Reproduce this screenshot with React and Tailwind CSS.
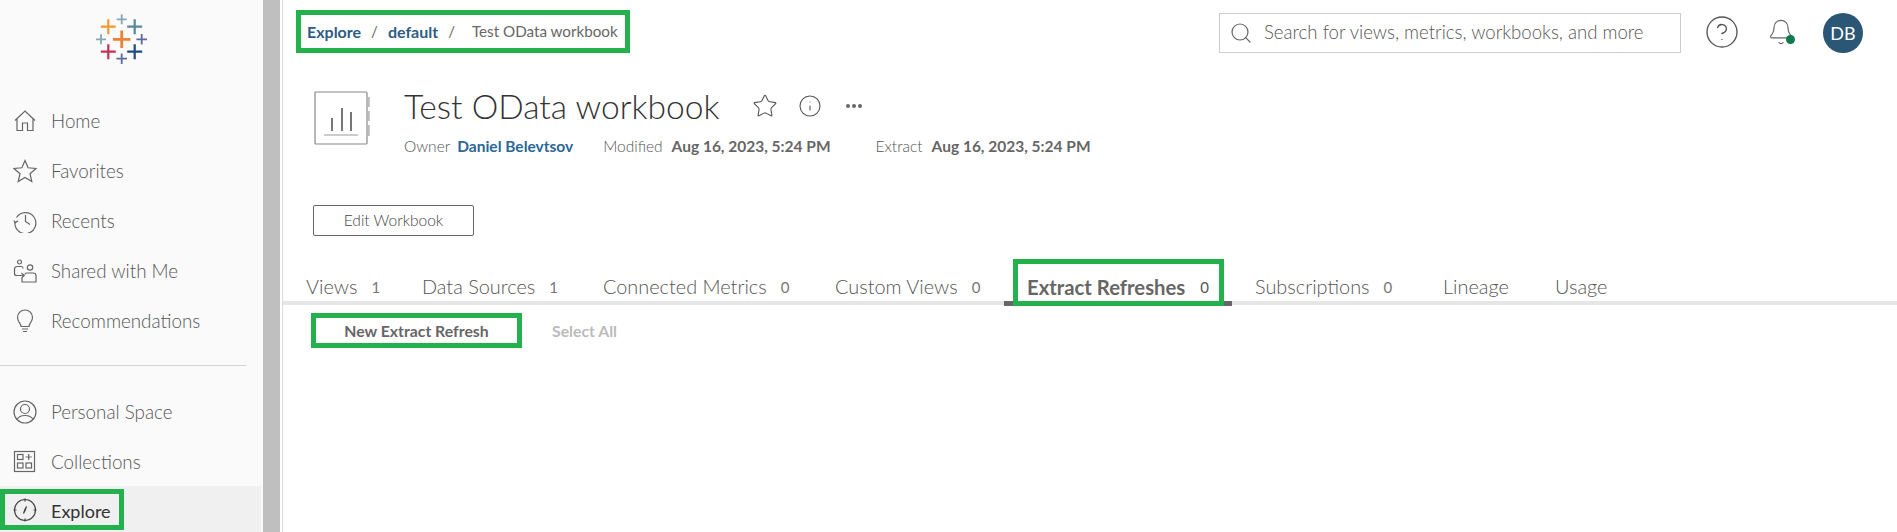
import React from "react";
import { Star, Info, Search, CircleHelp, Bell } from "lucide-react";

const font = "font-['Lato','Liberation_Sans',sans-serif]";

function Cross({ x, y, r, w, c }) {
  return (
    <path d={`M${x - r} ${y}H${x + r}M${x} ${y - r}V${y + r}`} stroke={c} strokeWidth={w} fill="none" />
  );
}

function Logo() {
  return (
    <svg width="52" height="52" viewBox="96 14 52 52">
      <Cross x={121.7} y={39.3} r={8.7} w={2.8} c="#ee8133" />
      <Cross x={121.7} y={19.3} r={5} w={1.8} c="#84a9b5" />
      <Cross x={108.3} y={26.7} r={7.5} w={2.2} c="#f0992e" />
      <Cross x={134.7} y={26.7} r={7.5} w={2.2} c="#5b879b" />
      <Cross x={101} y={39.3} r={5} w={1.8} c="#84a9b5" />
      <Cross x={141.7} y={39.3} r={5.3} w={1.8} c="#5f6a9c" />
      <Cross x={108.3} y={51.7} r={7.5} w={2.2} c="#c8304f" />
      <Cross x={134.7} y={51.7} r={7.5} w={2.2} c="#1f4a80" />
      <Cross x={121.7} y={58.7} r={5.3} w={1.8} c="#5f6a9c" />
    </svg>
  );
}

const S = { fill: "none", stroke: "#666", strokeWidth: 1.2 };

const icons = {
  home: <path {...S} d="M2 11.5 12 2l10 9.5M4 10v11.5h5.500V14h5v7.500H20V10" />,
  star: <path {...S} d="M12 1.500l3.100 7.300 7.900.7-6 5.200 1.800 7.800L12 18.400l-6.800 4.100L7 14.700 1 9.500l7.900-.7z" />,
  recents: (
    <g {...S}>
      <path d="M3.500 8.500A10.500 10.500 0 1 1 2 12.500" />
      <path d="M.8 11.500 2.400 13.800 5 11.800" />
      <path d="M12.500 6v6.500l4.500 3" />
    </g>
  ),
  shared: (
    <g {...S}>
      <circle cx="6.500" cy="3" r="2" />
      <path d="M1.500 12.500V10q0-2.500 3-2.500h4q1.500 0 1.500 2" />
      <circle cx="17" cy="8.500" r="2.700" />
      <path d="M9 18V23H23V16.500Q23 14 20 14H13.500Q12 14 12 15.500M1.500 11v3.500q0 2 2 2H11M8.500 14l2.700 2.500-2.700 2.500" />
    </g>
  ),
  bulb: (
    <g {...S}>
      <path d="M8.500 17.500c0-3-3.500-4.500-3.500-9a7.500 7.500 0 0 1 15 0c0 4.500-3.500 6-3.500 9z" transform="translate(-0.5 0)" />
      <path d="M9 20h6M10 22.500h4" />
    </g>
  ),
  person: (
    <g {...S}>
      <circle cx="12" cy="12" r="11" />
      <circle cx="12" cy="9" r="4.500" />
      <path d="M4 19.500q2-4 8-4t8 4" />
    </g>
  ),
  collections: (
    <g {...S}>
      <rect x="1.500" y="1.500" width="20" height="20" />
      <rect x="4.500" y="4.500" width="5.500" height="5" />
      <rect x="4.500" y="13" width="5.500" height="5" />
      <rect x="13" y="13" width="5.500" height="5" />
      <path d="M15.700 4v6M12.700 7h6" />
    </g>
  ),
  compass: (
    <g fill="none" stroke="#444" strokeWidth="1.200">
      <circle cx="12" cy="12" r="10.500" />
      <path d="M12 .5v3M12 20.500v3M.5 12h3M20.500 12h3" />
      <path d="M13.500 8.500 11.700 12l-1.200 3.500L12.300 12z" fill="#444" />
    </g>
  ),
};

function NavItem({ icon, label, active }) {
  return (
    <div
      className={
        active
          ? "mt-[-1px] h-[46px] w-[261px] shrink-0 bg-[#f0f0f0] pt-[3px]"
          : "flex h-[50px] shrink-0 items-center pl-[13px]"
      }
    >
      {active ? (
        <div className="flex h-[41px] w-[124px] items-center border-[5px] border-[#22b14c] pl-[8px]">
          <svg width="24" height="24" viewBox="0 0 24 24" className="shrink-0">{icons[icon]}</svg>
          <span className="ml-[14px] pt-[3px] text-[18px] text-[#333]">{label}</span>
        </div>
      ) : (
        <>
          <svg width="24" height="24" viewBox="0 0 24 24" className="shrink-0">{icons[icon]}</svg>
          <span className="ml-[14px] text-[18.800px] font-light text-[#555]">{label}</span>
        </>
      )}
    </div>
  );
}

function Tab({ label, count, className, active }) {
  return (
    <div className={`flex h-[42px] items-center pt-[14px] ${className}`}>
      <span className={active ? "text-[20.300px] font-bold text-[#666]" : "text-[19.900px] font-light text-[#555]"}>{label}</span>
      {count !== undefined && (
        <span className={active ? "ml-[15px] text-[15px] text-[#555]" : "ml-[14px] text-[15px] text-[#777]"}>{count}</span>
      )}
    </div>
  );
}

function Meta({ label, value, link, className }) {
  return (
    <div className={`flex items-center ${className}`}>
      <span className="text-[15.500px] font-light text-[#555]">{label}</span>
      <span className={link ? "ml-[7px] text-[15.500px] font-bold text-[#2b6797]" : "ml-[9px] text-[15.500px] font-bold text-[#666]"}>{value}</span>
    </div>
  );
}

export default function App() {
  return (
    <div className={`flex h-[532px] w-[1897px] overflow-hidden bg-white ${font}`}>
      <aside className="flex w-[263px] shrink-0 flex-col bg-[#fafafa]">
        <div className="h-[96px] shrink-0 pl-[96px] pt-[14px]"><Logo /></div>
        <NavItem icon="home" label="Home" />
        <NavItem icon="star" label="Favorites" />
        <NavItem icon="recents" label="Recents" />
        <NavItem icon="shared" label="Shared with Me" />
        <NavItem icon="bulb" label="Recommendations" />
        <div className="mt-[19px] mb-[21px] h-px w-[246px] shrink-0 bg-[#d4d4d4]" />
        <NavItem icon="person" label="Personal Space" />
        <NavItem icon="collections" label="Collections" />
        <NavItem icon="compass" label="Explore" active />
      </aside>
      <div className="w-[17px] shrink-0 bg-[#bfbfbf]" />
      <div className="ml-[2px] w-px shrink-0 bg-[#dcdcdc]" />
      <main className="flex min-w-0 flex-1 flex-col">
        <div className="flex h-[65px] items-start pl-[13px]">
          <div className="mt-[10px] flex h-[43px] w-[334px] items-center border-[5px] border-[#22b14c] pl-[6px]">
            <span className="text-[16px] font-bold text-[#2b5d84]">Explore</span>
            <span className="ml-[10px] text-[15px] text-[#666]">/</span>
            <span className="ml-[10px] text-[16px] font-bold text-[#2b5d84]">default</span>
            <span className="ml-[10px] text-[15px] text-[#666]">/</span>
            <span className="ml-[17px] text-[15.200px] text-[#666]">Test OData workbook</span>
          </div>
          <div className="ml-[589px] mt-[13px] flex h-[40px] w-[462px] items-center border border-[#ccc] pl-[9px]">
            <Search size={24} strokeWidth={1.2} color="#666" />
            <span className="ml-[11px] text-[18.600px] font-light text-[#555]">Search for views, metrics, workbooks, and more</span>
          </div>
          <CircleHelp size={36} strokeWidth={0.9} color="#555" className="ml-[23px] mt-[14px]" />
          <div className="relative ml-[27px] mt-[18px]">
            <Bell size={28} strokeWidth={1} color="#666" />
            <div className="absolute bottom-[2px] right-[0px] h-[9px] w-[9px] rounded-full bg-[#0f7a50]" />
          </div>
          <div className="ml-[28px] mt-[13px] flex h-[40px] w-[40px] items-center justify-center rounded-full bg-[#2b5675] text-[18px] text-white">DB</div>
        </div>

        <div className="flex pl-[31px] pt-[26px]">
          <svg width="56" height="56" viewBox="0 0 56 56" className="shrink-0">
            <rect x="1" y="1" width="52" height="52" rx="1" fill="#fff" stroke="#888" strokeWidth="1.200" />
            <path d="M54.500 6v10M54.500 20v10M54.500 34v11" stroke="#bbb" strokeWidth="2.500" />
            <path d="M18 27v13M28 17v23M37 21v19" stroke="#777" strokeWidth="2" />
            <path d="M10 44h34" stroke="#bbb" strokeWidth="1.500" />
          </svg>
          <div className="ml-[34px] flex flex-col">
            <div className="flex h-[30px] items-center">
              <h1 className="text-[33.600px] font-light text-[#333]">Test OData workbook</h1>
              <Star size={26} strokeWidth={1} color="#555" className="ml-[32px]" />
              <Info size={24} strokeWidth={1.100} color="#555" className="ml-[20px]" />
              <svg width="18" height="6" viewBox="0 0 18 6" className="ml-[23px]"><circle cx="3" cy="3" r="2" fill="#666" /><circle cx="9" cy="3" r="2" fill="#666" /><circle cx="15" cy="3" r="2" fill="#666" /></svg>
            </div>
            <div className="mt-[17px] flex h-[18px]">
              <Meta label="Owner" value="Daniel Belevtsov" link />
              <Meta label="Modified" value="Aug 16, 2023, 5:24 PM" className="ml-[30px]" />
              <Meta label="Extract" value="Aug 16, 2023, 5:24 PM" className="ml-[45px]" />
            </div>
          </div>
        </div>

        <button className="ml-[30px] mt-[49px] h-[31px] w-[161px] shrink-0 rounded-[2px] border border-[#666] text-[15.500px] font-light text-[#444]">Edit Workbook</button>

        <div className="relative mt-[23px] flex h-[42px] shrink-0 pl-[23px]">
          <Tab label="Views" count="1" className="w-[116px]" />
          <Tab label="Data Sources" count="1" className="w-[181px]" />
          <Tab label="Connected Metrics" count="0" className="w-[232px]" />
          <Tab label="Custom Views" count="0" className="w-[192px]" />
          <Tab label="Extract Refreshes" count="0" className="w-[228px]" active />
          <Tab label="Subscriptions" count="0" className="w-[188px]" />
          <Tab label="Lineage" className="w-[112px]" />
          <Tab label="Usage" />
          <div className="absolute bottom-[-4px] left-0 right-0 h-[4px] bg-[#e6e6e6]" />
          <div className="absolute bottom-[-5px] left-[721px] h-[5px] w-[228px] bg-[#666]" />
          <div className="absolute bottom-[-5px] left-[730px] top-0 w-[211px] border-[5px] border-[#22b14c]" />
        </div>

        <div className="mt-[12px] flex items-center pl-[28px]">
          <div className="flex h-[35px] w-[211px] items-center justify-center border-[5px] border-[#22b14c] text-[15.800px] font-bold text-[#666]">New Extract Refresh</div>
          <span className="ml-[30px] text-[15.800px] font-bold text-[#bbb]">Select All</span>
        </div>
      </main>
    </div>
  );
}
